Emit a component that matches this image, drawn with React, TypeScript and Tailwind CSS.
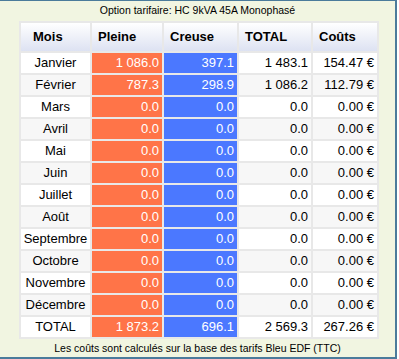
import React from "react";

type Row = { mois: string; pleine: string; creuse: string; total: string; cout: string };

const rows: Row[] = [
  { mois: "Janvier", pleine: "1 086.0", creuse: "397.1", total: "1 483.1", cout: "154.47 €" },
  { mois: "Février", pleine: "787.3", creuse: "298.9", total: "1 086.2", cout: "112.79 €" },
  { mois: "Mars", pleine: "0.0", creuse: "0.0", total: "0.0", cout: "0.00 €" },
  { mois: "Avril", pleine: "0.0", creuse: "0.0", total: "0.0", cout: "0.00 €" },
  { mois: "Mai", pleine: "0.0", creuse: "0.0", total: "0.0", cout: "0.00 €" },
  { mois: "Juin", pleine: "0.0", creuse: "0.0", total: "0.0", cout: "0.00 €" },
  { mois: "Juillet", pleine: "0.0", creuse: "0.0", total: "0.0", cout: "0.00 €" },
  { mois: "Août", pleine: "0.0", creuse: "0.0", total: "0.0", cout: "0.00 €" },
  { mois: "Septembre", pleine: "0.0", creuse: "0.0", total: "0.0", cout: "0.00 €" },
  { mois: "Octobre", pleine: "0.0", creuse: "0.0", total: "0.0", cout: "0.00 €" },
  { mois: "Novembre", pleine: "0.0", creuse: "0.0", total: "0.0", cout: "0.00 €" },
  { mois: "Décembre", pleine: "0.0", creuse: "0.0", total: "0.0", cout: "0.00 €" },
  { mois: "TOTAL", pleine: "1 873.2", creuse: "696.1", total: "2 569.3", cout: "267.26 €" },
];

const headers = ["Mois", "Pleine", "Creuse", "TOTAL", "Coûts"];

export default function App() {
  return (
    <div className="w-[399px] h-[359px] bg-white font-['Liberation_Sans',Arial,sans-serif]">
      <div className="w-[397px] h-[359px] bg-[#f1f5e1] border-t border-r-2 border-b-2 border-[#4b7b9b] flex flex-col">
        <div className="h-5 flex items-center justify-center text-[10.5px] text-black">
          Option tarifaire: HC 9kVA 45A Monophasé
        </div>

        <div className="ml-[19px] w-[360px] grid grid-cols-[69px_70px_73px_72px_64px] auto-rows-[20px] grid-rows-[28px] gap-[2px] p-[2px] bg-[#e8e8e8] text-[13px] text-black">
          {headers.map((h, i) => (
            <div
              key={h}
              className={`flex items-center font-bold bg-gradient-to-b from-white to-[#dde2f2] ${i === 0 ? "pl-3" : "pl-1.5"}`}
            >
              {h}
            </div>
          ))}
          {rows.map((r, i) => {
            const bg = i % 2 === 1 ? "bg-[#f7f7f7]" : "bg-white";
            return (
              <React.Fragment key={r.mois}>
                <div className={`flex items-center justify-center ${bg}`}>{r.mois}</div>
                <div className="flex items-center justify-end pr-[3px] bg-[#ff7448] text-white">{r.pleine}</div>
                <div className="flex items-center justify-end pr-[3px] bg-[#4b78ff] text-white">{r.creuse}</div>
                <div className={`flex items-center justify-end pr-[3px] ${bg}`}>{r.total}</div>
                <div className={`flex items-center justify-end pr-[3px] ${bg}`}>{r.cout}</div>
              </React.Fragment>
            );
          })}
        </div>

        <div className="flex-1 flex items-center justify-center pt-0.5 text-[10.5px] text-black">
          Les coûts sont calculés sur la base des tarifs Bleu EDF (TTC)
        </div>
      </div>
    </div>
  );
}
